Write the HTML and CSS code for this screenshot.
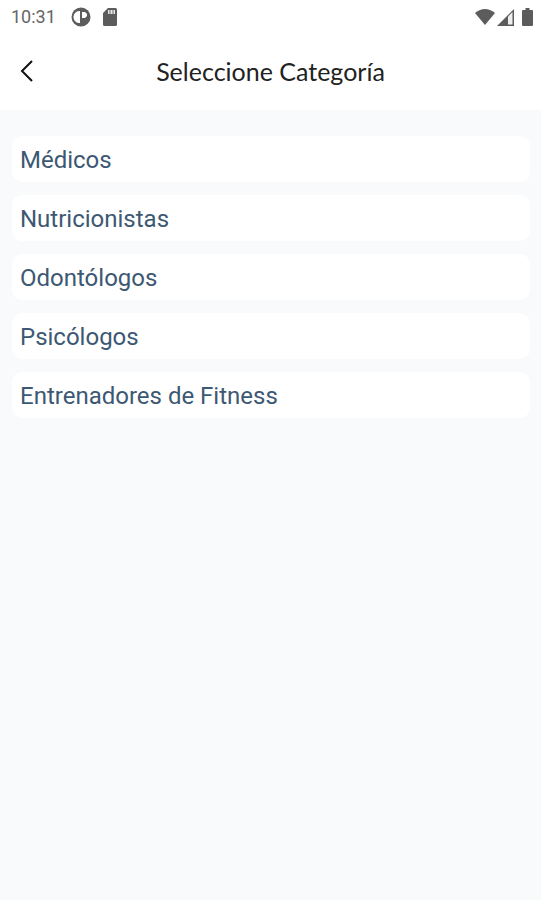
FILE: index.html
```html
<!DOCTYPE html>
<html lang="es">
<head>
    <meta charset="UTF-8">
    <meta name="viewport" content="width=device-width, initial-scale=1.0">
    <title>Seleccione Categoría</title>
    <link rel="stylesheet" href="styles.css">
</head>
<body>
    <div class="status-bar">
        <span class="time">10:31</span>
        <svg class="icon-app" width="20" height="20" viewBox="0 0 20 20" aria-hidden="true">
            <circle cx="10" cy="10" r="9.500" fill="#5c5c5c"/>
            <path d="M9 4a6 6 0 0 0-1 12h1z" fill="#fff"/>
            <path d="M11 5h3l2 2v2l-2 2h-3z" fill="#fff"/>
        </svg>
        <svg class="icon-sd" width="14" height="18" viewBox="0 0 14 18" aria-hidden="true">
            <path d="M5 0h7.500a1.500 1.500 0 0 1 1.500 1.500v15a1.500 1.500 0 0 1-1.500 1.500h-11A1.500 1.500 0 0 1 0 16.500V5z" fill="#5c5c5c"/>
            <path d="M5 2h7v4H5z" fill="#aaa"/>
            <path d="M5 2h1v4H5zM8 2h1v4H8zM11 2h1v4h-1z" fill="#e6e6e6"/>
        </svg>
        <div class="status-right">
            <svg width="20" height="16" viewBox="0 0 20 16" aria-hidden="true">
                <path d="M0 4Q10-4 20 4L10 16z" fill="#5c5c5c"/>
            </svg>
            <svg width="17" height="17" viewBox="0 0 17 17" aria-hidden="true">
                <path d="M0 17L17 0v17z" fill="#5c5c5c"/>
                <path d="M11 7.500L15.500 3v12.500H11z" fill="#eee"/>
            </svg>
            <svg class="icon-battery" width="11" height="18" viewBox="0 0 11 18" aria-hidden="true">
                <path d="M3.500 0h4v2H10a1 1 0 0 1 1 1v14a1 1 0 0 1-1 1H1a1 1 0 0 1-1-1V3a1 1 0 0 1 1-1h2.500z" fill="#5c5c5c"/>
            </svg>
        </div>
    </div>

    <header class="header">
        <button type="button" class="back-btn" aria-label="Volver">
            <svg width="14" height="24" viewBox="0 0 14 24" aria-hidden="true">
                <path d="M12 2L2 12l10 10" fill="none" stroke="#111" stroke-width="2"/>
            </svg>
        </button>
        <h1>Seleccione Categoría</h1>
    </header>

    <main class="categories">
        <a href="#medicos" class="category">Médicos</a>
        <a href="#nutricionistas" class="category">Nutricionistas</a>
        <a href="#odontologos" class="category">Odontólogos</a>
        <a href="#psicologos" class="category">Psicólogos</a>
        <a href="#fitness" class="category">Entrenadores de Fitness</a>
    </main>
</body>
</html>
```
FILE: styles.css
```css
* {
    box-sizing: border-box;
}

body {
    margin: 0;
    min-height: 100vh;
    background-color: #f8fafc;
    font-family: Roboto, sans-serif;
}

.status-bar {
    display: flex;
    align-items: center;
    height: 34px;
    padding: 0 8px 0 11px;
    background-color: #fff;
    color: #666;
}

.time {
    font-size: 18px;
    line-height: 34px;
}

.icon-app {
    margin-left: 15px;
}

.icon-sd {
    margin-left: 12px;
}

.status-right {
    display: flex;
    align-items: center;
    gap: 2px;
    margin-left: auto;
}

.icon-battery {
    margin-left: 6px;
}

.header {
    display: grid;
    grid-template-columns: 44px 1fr 44px;
    align-items: center;
    height: 76px;
    padding-bottom: 2px;
    background-color: #fff;
}

.back-btn {
    display: flex;
    align-items: center;
    height: 44px;
    padding: 0 0 0 20px;
    border: none;
    background: none;
    cursor: pointer;
}

h1 {
    margin: 0;
    font-family: Lato, sans-serif;
    font-size: 25px;
    font-weight: 400;
    line-height: 32px;
    text-align: center;
    color: #222;
}

.categories {
    display: flex;
    flex-direction: column;
    gap: 13px;
    padding: 26px 11px 26px 12px;
}

.category {
    padding: 9px 8px 7px;
    border-radius: 10px;
    background-color: #fff;
    color: #3d5873;
    font-size: 24px;
    line-height: 30px;
    text-decoration: none;
}
```
